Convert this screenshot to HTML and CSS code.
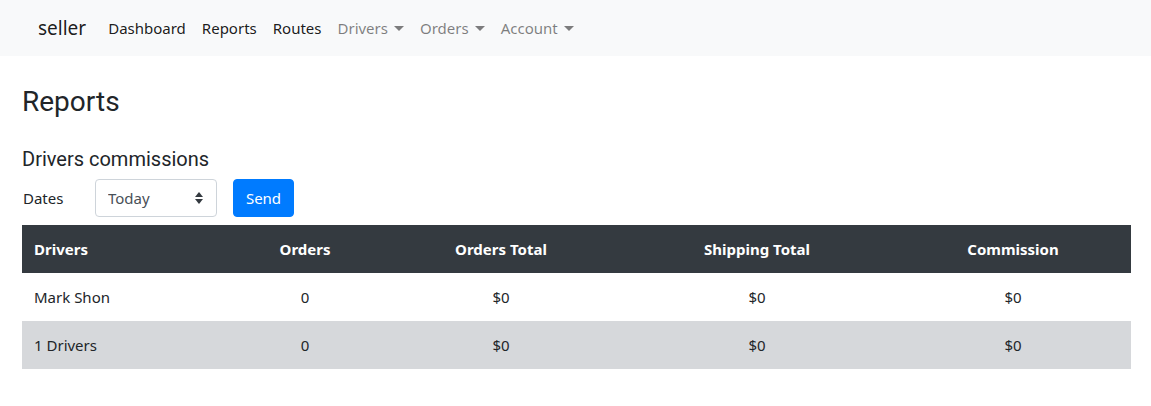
FILE: index.html
```html
<!DOCTYPE html>
<html lang="en">
<head>
    <meta charset="UTF-8">
    <meta name="viewport" content="width=device-width, initial-scale=1.0">
    <title>Reports</title>
    <link rel="stylesheet" href="styles.css">
</head>
<body>
    <nav class="navbar">
        <a class="brand" href="#">seller</a>
        <ul class="nav">
            <li><a class="nav-link" href="#">Dashboard</a></li>
            <li><a class="nav-link" href="#">Reports</a></li>
            <li><a class="nav-link" href="#">Routes</a></li>
            <li><a class="nav-link muted dropdown" href="#">Drivers</a></li>
            <li><a class="nav-link muted dropdown" href="#">Orders</a></li>
            <li><a class="nav-link muted dropdown" href="#">Account</a></li>
        </ul>
    </nav>

    <main class="page">
        <h3 class="title">Reports</h3>

        <h5 class="subtitle">Drivers commissions</h5>
        <form class="filter">
            <label for="dates">Dates</label>
            <div class="select-wrap">
                <select id="dates">
                    <option>Today</option>
                    <option>Yesterday</option>
                    <option>This week</option>
                </select>
                <span class="arrows"></span>
            </div>
            <button type="button" class="btn">Send</button>
        </form>

        <table class="report">
            <thead>
                <tr>
                    <th class="col-driver">Drivers</th>
                    <th class="col-orders">Orders</th>
                    <th class="col-total">Orders Total</th>
                    <th class="col-ship">Shipping Total</th>
                    <th class="col-comm">Commission</th>
                </tr>
            </thead>
            <tbody>
                <tr>
                    <td>Mark Shon</td>
                    <td>0</td>
                    <td>$0</td>
                    <td>$0</td>
                    <td>$0</td>
                </tr>
                <tr class="totals">
                    <td>1 Drivers</td>
                    <td>0</td>
                    <td>$0</td>
                    <td>$0</td>
                    <td>$0</td>
                </tr>
            </tbody>
        </table>
    </main>
</body>
</html>
```

FILE: styles.css
```css
body {
    margin: 0;
    font-family: "Noto Sans", "Open Sans", sans-serif;
    font-size: 15px;
    color: #212529;
    background: #fff;
}
a {
    text-decoration: none;
}

/* navbar */
.navbar {
    display: flex;
    align-items: center;
    height: 56px;
    padding: 0 0 0 38px;
    background: #f8f9fa;
}
.brand {
    font-size: 19px;
    color: rgba(0, 0, 0, .9);
    margin-right: 14px;
}
.nav {
    display: flex;
    list-style: none;
    margin: 0;
    padding: 0;
}
.nav-link {
    display: block;
    padding: 8px;
    color: rgba(0, 0, 0, .9);
}
.nav-link.muted {
    color: rgba(0, 0, 0, .5);
}
.dropdown::after {
    content: "";
    display: inline-block;
    margin-left: 6px;
    vertical-align: 3px;
    border-top: 5px solid;
    border-left: 5px solid transparent;
    border-right: 5px solid transparent;
}

/* page */
.page {
    padding: 29px 20px 0 22px;
}
.title {
    font-family: Roboto, sans-serif;
    font-weight: 400;
    font-size: 28px;
    line-height: 1.2;
    margin: 0 0 28px;
}
.subtitle {
    font-family: Roboto, sans-serif;
    font-weight: 400;
    font-size: 20px;
    line-height: 1.2;
    margin: 0 0 8px;
}
.filter {
    display: flex;
    align-items: center;
    margin-bottom: 8px;
}
.filter label {
    width: 72px;
    padding-left: 1px;
}
.select-wrap {
    position: relative;
    width: 122px;
    margin-right: 16px;
}
.arrows {
    position: absolute;
    right: 14px;
    top: 13px;
    pointer-events: none;
}
.arrows::before, .arrows::after {
    content: "";
    display: block;
    width: 0;
    height: 0;
    border-left: 4px solid transparent;
    border-right: 4px solid transparent;
}
.arrows::before {
    border-bottom: 5px solid #343a40;
    margin-bottom: 2px;
}
.arrows::after {
    border-top: 5px solid #343a40;
}
select {
    appearance: none;
    -webkit-appearance: none;
    width: 100%;
    height: 38px;
    padding: 0 12px;
    font: inherit;
    color: #495057;
    background: #fff;
    border: 1px solid #ced4da;
    border-radius: 4px;
}
.btn {
    height: 38px;
    width: 61px;
    font: inherit;
    color: #fff;
    background: #007bff;
    border: 1px solid #007bff;
    border-radius: 4px;
    cursor: pointer;
}

/* table */
.report {
    width: 1109px;
    border-collapse: collapse;
}
.report th, .report td {
    height: 48px;
    padding: 0 12px;
    box-sizing: border-box;
    text-align: center;
}
.report th:first-child, .report td:first-child {
    text-align: left;
}
.report th {
    background: #343a40;
    color: #fff;
    font-weight: 700;
}
.col-driver { width: 205px; }
.col-orders { width: 156px; }
.col-total { width: 236px; }
.col-ship { width: 276px; }
.col-comm { width: 236px; }
.totals td {
    background: #d6d8db;
}
```
